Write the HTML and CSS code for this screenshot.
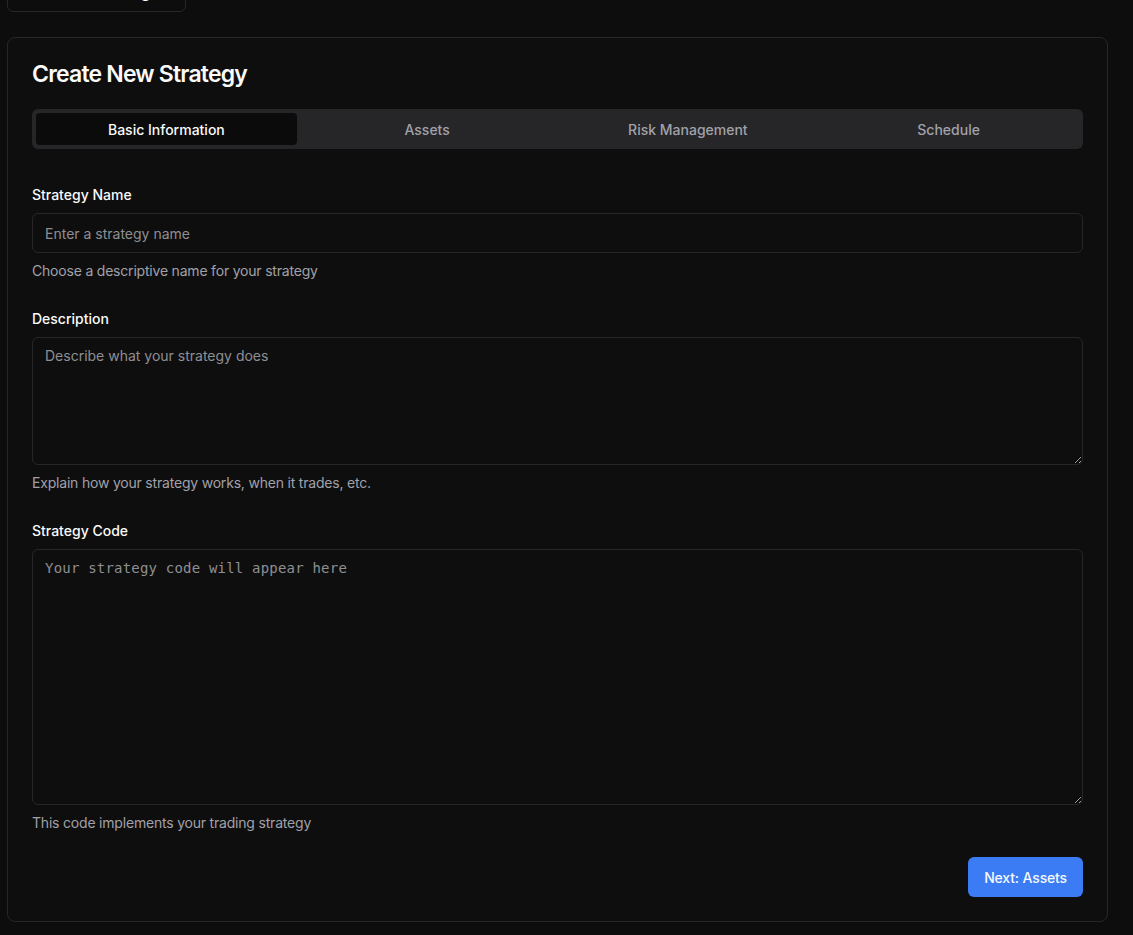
FILE: index.html
```html
<!DOCTYPE html>
<html lang="en">
<head>
<meta charset="utf-8">
<title>Create New Strategy</title>
<link rel="stylesheet" href="styles.css">
</head>
<body>
  <div class="top-clip">
    <button class="back-btn" type="button">
      <svg width="16" height="16" viewBox="0 0 24 24" fill="none" stroke="currentColor" stroke-width="2" stroke-linecap="round" stroke-linejoin="round"><path d="m12 19-7-7 7-7"/><path d="M19 12H5"/></svg>
      <span>Back to Strategies</span>
    </button>
  </div>

  <section class="card">
    <h1 class="card-title">Create New Strategy</h1>

    <div class="tabs">
      <div class="tab active">Basic Information</div>
      <div class="tab">Assets</div>
      <div class="tab">Risk Management</div>
      <div class="tab">Schedule</div>
    </div>

    <form class="form">
      <div class="field">
        <label class="label">Strategy Name</label>
        <input class="input" type="text" placeholder="Enter a strategy name">
        <p class="help">Choose a descriptive name for your strategy</p>
      </div>

      <div class="field">
        <label class="label">Description</label>
        <textarea class="textarea desc" placeholder="Describe what your strategy does"></textarea>
        <p class="help">Explain how your strategy works, when it trades, etc.</p>
      </div>

      <div class="field">
        <label class="label">Strategy Code</label>
        <textarea class="textarea code" placeholder="Your strategy code will appear here"></textarea>
        <p class="help">This code implements your trading strategy</p>
      </div>

      <div class="actions">
        <button class="primary" type="button">Next: Assets</button>
      </div>
    </form>
  </section>
</body>
</html>
```

FILE: styles.css
```css
* { box-sizing: border-box; }

html, body {
  background: #0d0d0d;
}

body {
  margin: 0 8px 8px 7px;
  font-family: Inter, "Liberation Sans", sans-serif;
  color: #fafafa;
  font-size: 14px;
}

.top-clip {
  height: 12px;
  overflow: hidden;
  display: flex;
  align-items: flex-end;
  margin-bottom: 25px;
}

.back-btn {
  flex: none;
  width: 179px;
  height: 40px;
  display: flex;
  align-items: center;
  justify-content: center;
  gap: 8px;
  white-space: nowrap;
  background: #0d0d0d;
  border: 1px solid #27272a;
  border-radius: 6px;
  color: #fafafa;
  font-family: inherit;
  font-size: 14px;
  font-weight: 500;
  padding: 0 12px;
}

.card {
  width: 1101px;
  background: #0e0e0e;
  border: 1px solid #27272a;
  border-radius: 8px;
  padding: 24px;
}

.card-title {
  margin: 0 0 23px;
  font-size: 23px;
  line-height: 24px;
  font-weight: 600;
  letter-spacing: -0.035em;
  color: #fafafa;
}

.tabs {
  height: 40px;
  padding: 4px;
  background: #262628;
  border-radius: 6px;
  display: grid;
  grid-template-columns: repeat(4, 1fr);
  margin-bottom: 36px;
}

.tab {
  display: flex;
  align-items: center;
  justify-content: center;
  font-size: 14px;
  font-weight: 500;
  color: #a1a1aa;
  border-radius: 4px;
}

.tab.active {
  background: #0b0b0b;
  color: #fafafa;
}

.form {
  display: flex;
  flex-direction: column;
  gap: 28px;
}

.field {
  display: flex;
  flex-direction: column;
  gap: 8px;
}

.label {
  font-size: 14px;
  line-height: 20px;
  font-weight: 500;
  color: #fafafa;
}

.input, .textarea {
  width: 100%;
  background: #0e0e0e;
  border: 1px solid #27272a;
  border-radius: 6px;
  color: #fafafa;
  font-family: inherit;
  font-size: 14px;
  line-height: 20px;
  padding: 8px 12px;
  margin: 0;
  outline: none;
}

.input { height: 40px; }

.input::placeholder, .textarea::placeholder {
  color: #8e8e93;
}

.textarea {
  display: block;
  resize: vertical;
}

.textarea.desc { height: 128px; }

.textarea.code {
  height: 256px;
  font-family: "DejaVu Sans Mono", "Liberation Mono", monospace;
  font-size: 14px;
  letter-spacing: 0.2px;
  padding-top: 8px;
}

.help {
  margin: 0;
  font-size: 14px;
  line-height: 20px;
  letter-spacing: -0.2px;
  color: #a1a1aa;
}

.actions {
  display: flex;
  justify-content: flex-end;
  margin-top: -4px;
}

.primary {
  height: 40px;
  padding: 0 16px;
  background: #3b7cf4;
  color: #f5f8ff;
  border: none;
  border-radius: 6px;
  font-family: inherit;
  font-size: 14px;
  font-weight: 500;
  letter-spacing: -0.15px;
}
```
